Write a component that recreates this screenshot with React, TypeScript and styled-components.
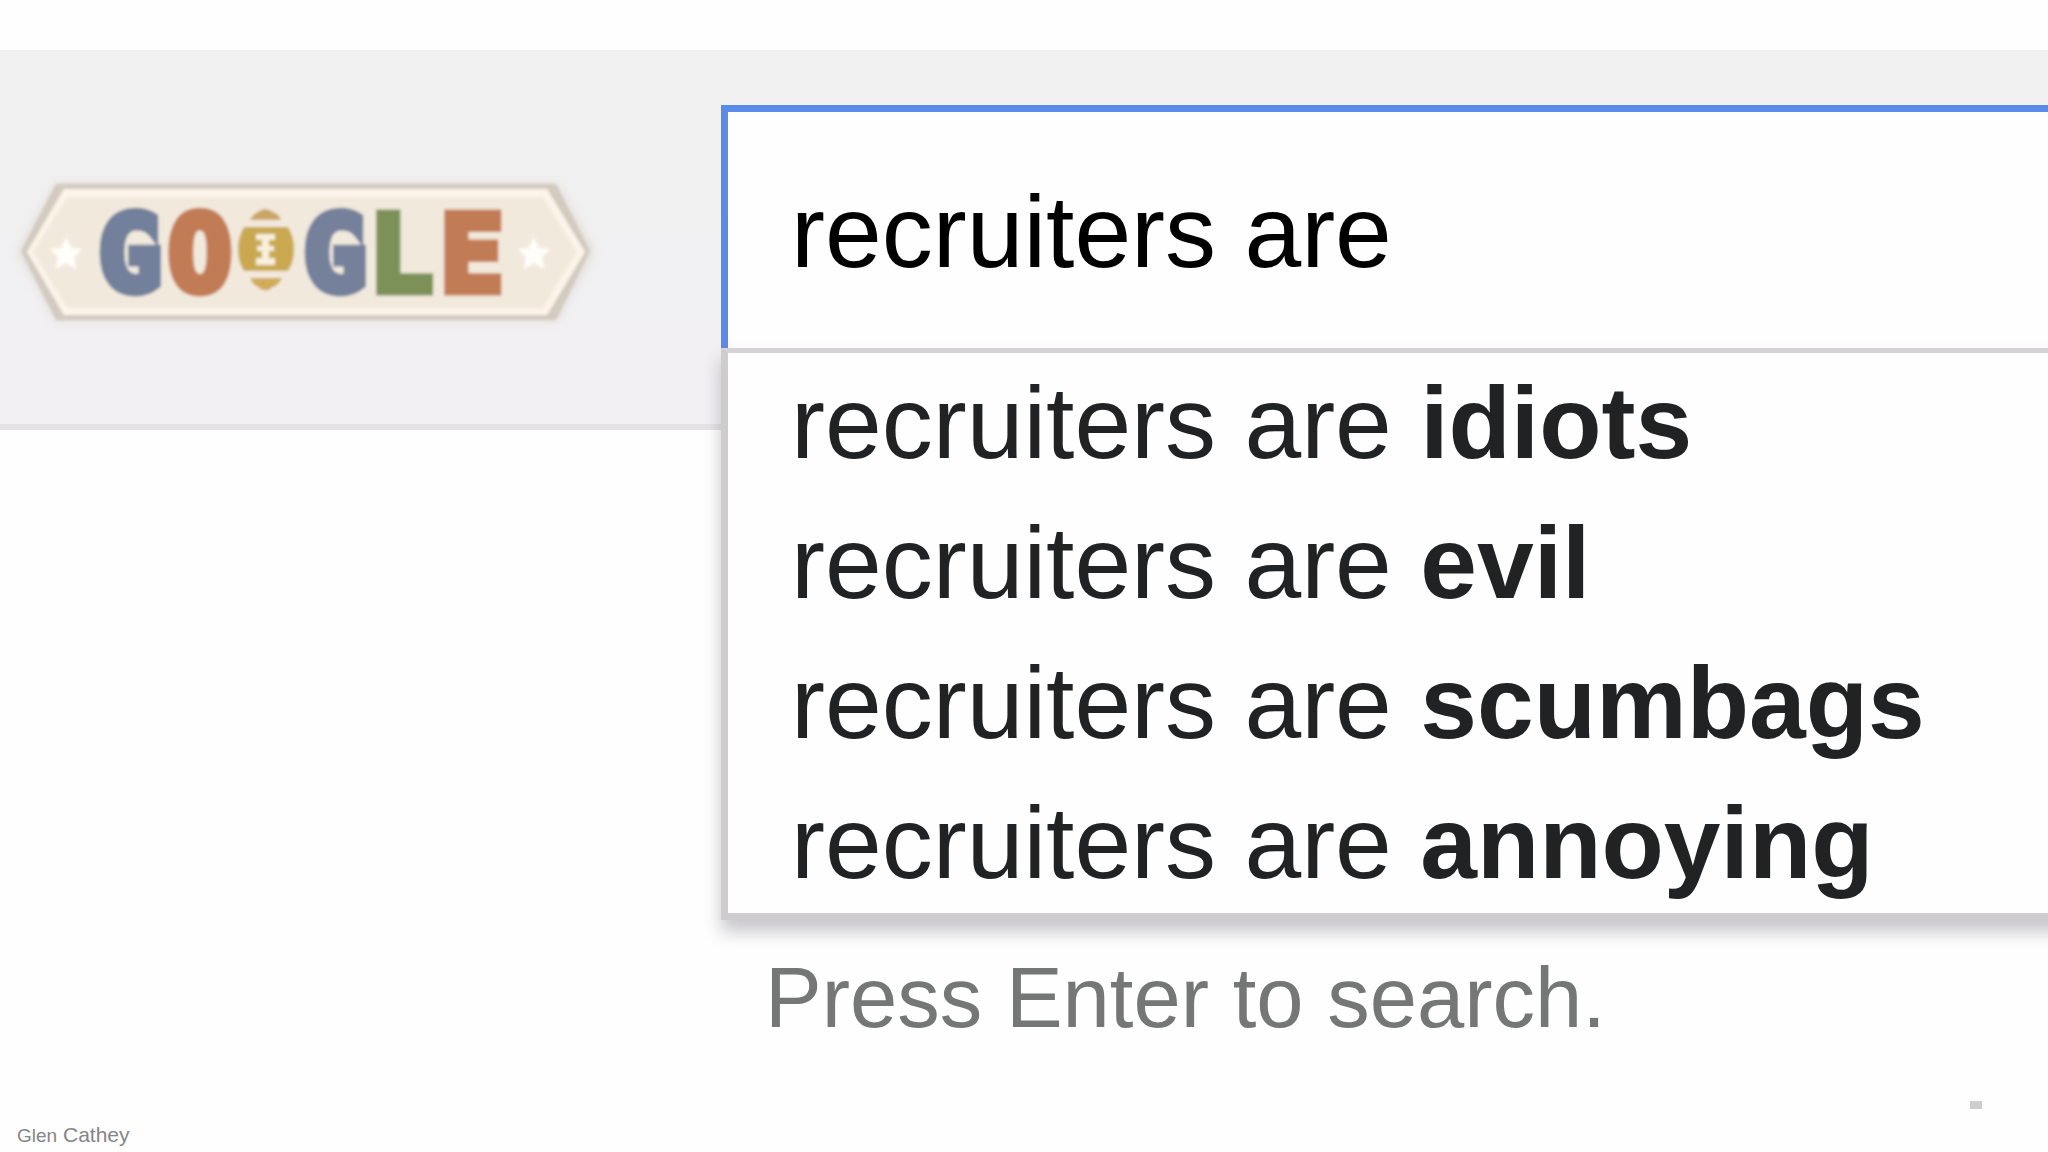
import React, { useState } from "react";
import styled, { createGlobalStyle } from "styled-components";

const GlobalStyle = createGlobalStyle`
  *, *::before, *::after { box-sizing: border-box; }
  body {
    margin: 0;
    background: #fefefe;
    font-family: "Liberation Sans", Arial, sans-serif;
  }
`;

const Page = styled.div`
  display: flex;
  flex-direction: column;
  min-height: 100vh;
  padding-top: 50px;
  overflow-x: clip;
`;

const Header = styled.header`
  display: grid;
  grid-template-columns: 721px minmax(0, 1fr);
  align-items: start;
  padding: 55px 0 76px;
  background: linear-gradient(#f0f0f0, #f2f0f3);
  border-bottom: 6px solid #e5e3e6;
`;

const LogoLink = styled.a`
  display: block;
  padding-top: 67px;
`;

const LogoArt = styled.svg`
  display: block;
  width: 620px;
  height: 160px;
`;

const LogoLetter = styled.text`
  font-family: "DejaVu Sans Mono", monospace;
  font-size: 106px;
  font-weight: 700;
  fill: ${(p) => p.color};
  stroke: ${(p) => p.color};
  stroke-width: 9px;
  text-anchor: middle;
`;

const SearchForm = styled.form`
  position: relative;
`;

const SearchInput = styled.input`
  display: block;
  width: 100%;
  height: 243px;
  padding: 4px 0 0 63px;
  border: solid #5b8be8;
  border-width: 7px 0 0 7px;
  border-radius: 0;
  outline: none;
  background: #fefefe;
  color: #000;
  font-family: inherit;
  font-size: 102px;
`;

const Dropdown = styled.div`
  position: absolute;
  top: 100%;
  left: 0;
  right: -24px;
`;

const SuggestionList = styled.ul`
  margin: 0;
  padding: 0;
  list-style: none;
  background: #fefefe;
  border: solid #cfccd0;
  border-width: 5px 0 7px 7px;
  border-top-color: #d6d3d7;
  box-shadow: 0 12px 16px rgba(60, 50, 65, 0.27);
`;

const Suggestion = styled.button`
  display: block;
  width: 100%;
  height: 140px;
  padding: 0 0 0 63px;
  border: 0;
  background: none;
  color: #212223;
  font-family: inherit;
  font-size: 102px;
  line-height: 140px;
  text-align: left;
  white-space: pre;
  cursor: pointer;
`;

const Hint = styled.p`
  margin: 28px 0 0;
  padding-left: 44px;
  color: #757676;
  font-size: 85px;
  line-height: 100px;
  white-space: nowrap;
`;

const Footer = styled.footer`
  display: flex;
  justify-content: space-between;
  align-items: flex-start;
  margin-top: auto;
  padding: 0 66px 4px 17px;
`;

const Author = styled.p`
  margin: 22px 0 0;
  color: #858589;
  font-size: 21px;
  line-height: 24px;
`;

const FirstName = styled.span`
  font-size: 19px;
`;

const Dash = styled.span`
  width: 12px;
  height: 8px;
  background: #cfcfcf;
`;

const STAR = "M0-17 5-6 16-5 8 3 10 15 0 9-10 15-8 3-16-5-5-6Z";

const LETTERS = [
  { char: "G", x: 130, color: "#72809b" },
  { char: "O", x: 200, color: "#c27c54" },
  { char: "G", x: 335, color: "#74809b" },
  { char: "L", x: 401, color: "#7c9159" },
  { char: "E", x: 472, color: "#c27c54" },
];

function Logo() {
  return (
    <LogoArt viewBox="0 172 620 160" role="img" aria-label="Google">
      <defs>
        <filter id="halo" x="-10%" y="-20%" width="120%" height="140%">
          <feGaussianBlur stdDeviation="5" />
        </filter>
        <filter id="soft" x="-5%" y="-5%" width="110%" height="110%">
          <feGaussianBlur stdDeviation="1.8" />
        </filter>
      </defs>
      <path d="M56 184H557L594 251 557 321H56L18 251Z" fill="#d8d2c5" opacity=".6" filter="url(#halo)" />
      <g filter="url(#soft)">
        <path d="M56 184H556L590 251 556 320H56L21 251Z" fill="#d3cac0" />
        <path d="M64 189H547L585 252 547 315H64L27 252Z" fill="#fcf4ea" />
        <path d="M67 197H543L577 252 543 308H67L33 252Z" fill="#f2e9dd" />
        <path d={STAR} fill="#fffefa" transform="translate(66 254)" />
        <path d={STAR} fill="#fffefa" transform="translate(534 254)" />
        {LETTERS.map((l) => (
          <LogoLetter key={l.x} x={l.x} y={291} color={l.color}>
            {l.char}
          </LogoLetter>
        ))}
        <path d="M250 220Q253 214 258 212Q265 206 273 212Q279 214 281 220Z" fill="#cba564" />
        <path d="M244 227H288Q294 237 294 249Q294 262 288 271H244Q238 262 238 249Q238 237 244 227Z" fill="#c9a850" />
        <path d="M250 278H282Q279 285 273 287Q265 294 258 287Q253 285 250 278Z" fill="#d0ab58" />
        <path d="M256 234H275V240H269V246H274V251H269V258H275V265H256V258H262V251H257V246H262V240H256Z" fill="#f7f0dd" />
      </g>
    </LogoArt>
  );
}

const ENDINGS = ["idiots", "evil", "scumbags", "annoying"];

export default function App() {
  const [query, setQuery] = useState("recruiters are");
  return (
    <>
      <GlobalStyle />
      <Page>
        <Header>
          <LogoLink href="#">
            <Logo />
          </LogoLink>
          <SearchForm role="search" onSubmit={(e) => e.preventDefault()}>
            <SearchInput
              type="text"
              aria-label="Search"
              autoComplete="off"
              spellCheck={false}
              value={query}
              onChange={(e) => setQuery(e.target.value)}
            />
            <Dropdown>
              <SuggestionList>
                {ENDINGS.map((ending) => (
                  <li key={ending}>
                    <Suggestion type="button" onClick={() => setQuery("recruiters are " + ending)}>
                      recruiters are <b>{ending}</b>
                    </Suggestion>
                  </li>
                ))}
              </SuggestionList>
              <Hint>Press Enter to search.</Hint>
            </Dropdown>
          </SearchForm>
        </Header>
        <Footer>
          <Author>
            <FirstName>Glen</FirstName> Cathey
          </Author>
          <Dash />
        </Footer>
      </Page>
    </>
  );
}
